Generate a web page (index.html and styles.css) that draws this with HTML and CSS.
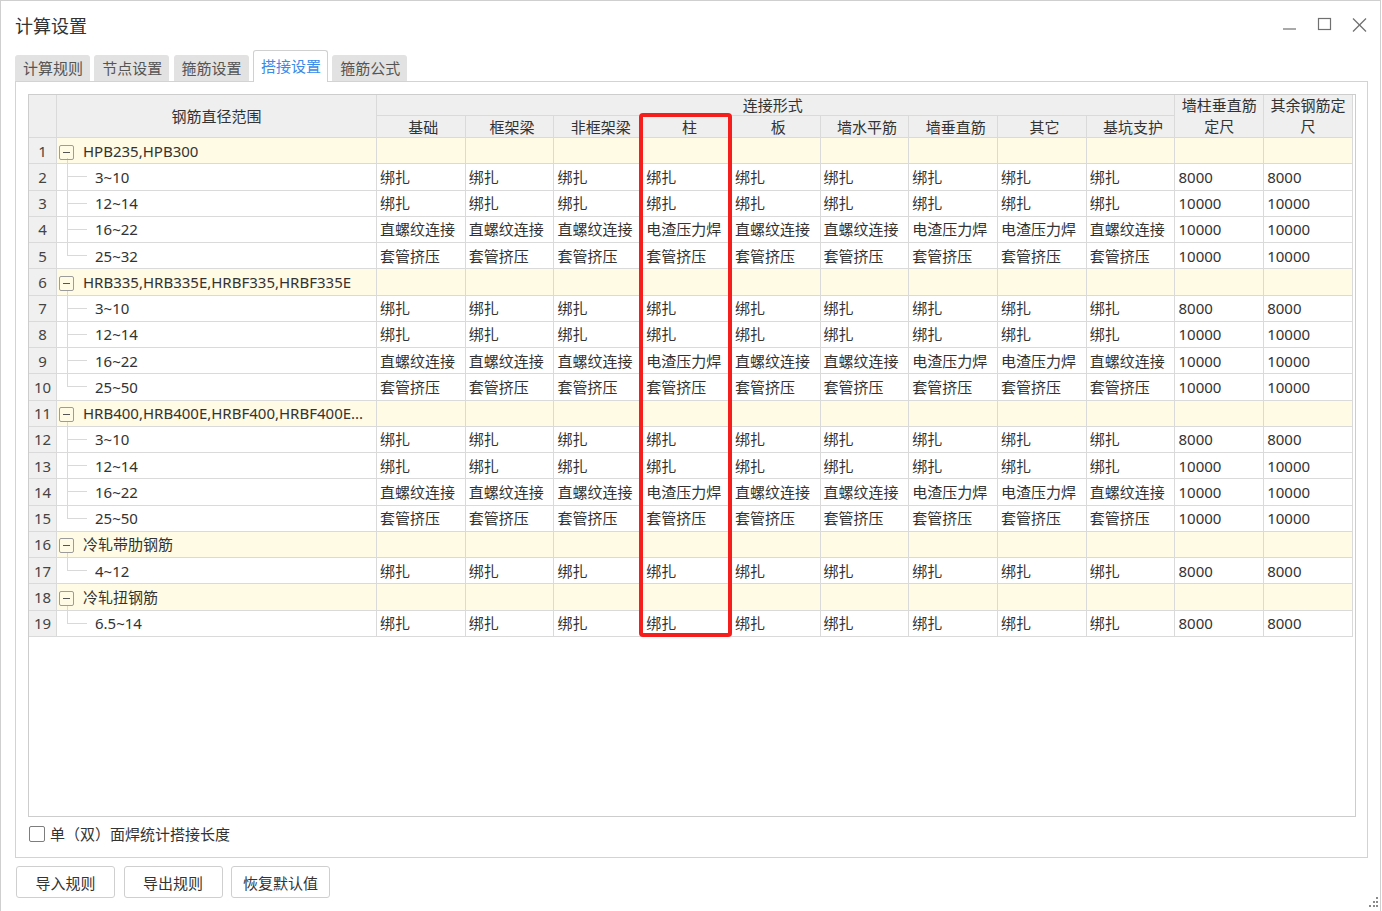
FILE: index.html
```html
<!DOCTYPE html>
<html lang="zh-CN">
<head>
<meta charset="utf-8">
<title>计算设置</title>
<link rel="stylesheet" href="styles.css">
</head>
<body>
<div class="window">
  <div class="titlebar">
    <span class="title">计算设置</span>
    <svg class="controls" width="90" height="18" viewBox="0 0 90 18">
      <line x1="3" y1="12" x2="16" y2="12" stroke="#707070" stroke-width="1.2"/>
      <rect x="38.5" y="1.5" width="12" height="11" fill="none" stroke="#707070" stroke-width="1.2"/>
      <line x1="73" y1="1.5" x2="86" y2="14.5" stroke="#707070" stroke-width="1.2"/>
      <line x1="86" y1="1.5" x2="73" y2="14.5" stroke="#707070" stroke-width="1.2"/>
    </svg>
  </div>
  <div class="tabs">
    <div class="tab">计算规则</div>
    <div class="tab">节点设置</div>
    <div class="tab">箍筋设置</div>
    <div class="tab active">搭接设置</div>
    <div class="tab">箍筋公式</div>
  </div>
  <div class="panel">
    <div class="frame">
      <table class="grid">
        <colgroup><col class="c-rn"><col class="c-nm"><col span="11"></colgroup>
        <thead>
          <tr class="h1">
            <th class="rn" rowspan="2"></th>
            <th rowspan="2">钢筋直径范围</th>
            <th colspan="9" class="span">连接形式</th>
            <th rowspan="2" class="wrap">墙柱垂直筋定尺</th>
            <th rowspan="2" class="wrap">其余钢筋定尺</th>
          </tr>
          <tr class="h2">
            <th>基础</th><th>框架梁</th><th>非框架梁</th><th>柱</th><th>板</th><th>墙水平筋</th><th>墙垂直筋</th><th>其它</th><th>基坑支护</th>
          </tr>
        </thead>
        <tbody>
          <tr class="grp"><td class="rn">1</td><td class="nm g"><i class="exp"></i>HPB235,HPB300</td><td></td><td></td><td></td><td></td><td></td><td></td><td></td><td></td><td></td><td></td><td></td></tr>
          <tr><td class="rn">2</td><td class="nm c">3~10</td><td>绑扎</td><td>绑扎</td><td>绑扎</td><td>绑扎</td><td>绑扎</td><td>绑扎</td><td>绑扎</td><td>绑扎</td><td>绑扎</td><td>8000</td><td>8000</td></tr>
          <tr><td class="rn">3</td><td class="nm c">12~14</td><td>绑扎</td><td>绑扎</td><td>绑扎</td><td>绑扎</td><td>绑扎</td><td>绑扎</td><td>绑扎</td><td>绑扎</td><td>绑扎</td><td>10000</td><td>10000</td></tr>
          <tr><td class="rn">4</td><td class="nm c">16~22</td><td>直螺纹连接</td><td>直螺纹连接</td><td>直螺纹连接</td><td>电渣压力焊</td><td>直螺纹连接</td><td>直螺纹连接</td><td>电渣压力焊</td><td>电渣压力焊</td><td>直螺纹连接</td><td>10000</td><td>10000</td></tr>
          <tr><td class="rn">5</td><td class="nm c last">25~32</td><td>套管挤压</td><td>套管挤压</td><td>套管挤压</td><td>套管挤压</td><td>套管挤压</td><td>套管挤压</td><td>套管挤压</td><td>套管挤压</td><td>套管挤压</td><td>10000</td><td>10000</td></tr>
          <tr class="grp"><td class="rn">6</td><td class="nm g"><i class="exp"></i>HRB335,HRB335E,HRBF335,HRBF335E</td><td></td><td></td><td></td><td></td><td></td><td></td><td></td><td></td><td></td><td></td><td></td></tr>
          <tr><td class="rn">7</td><td class="nm c">3~10</td><td>绑扎</td><td>绑扎</td><td>绑扎</td><td>绑扎</td><td>绑扎</td><td>绑扎</td><td>绑扎</td><td>绑扎</td><td>绑扎</td><td>8000</td><td>8000</td></tr>
          <tr><td class="rn">8</td><td class="nm c">12~14</td><td>绑扎</td><td>绑扎</td><td>绑扎</td><td>绑扎</td><td>绑扎</td><td>绑扎</td><td>绑扎</td><td>绑扎</td><td>绑扎</td><td>10000</td><td>10000</td></tr>
          <tr><td class="rn">9</td><td class="nm c">16~22</td><td>直螺纹连接</td><td>直螺纹连接</td><td>直螺纹连接</td><td>电渣压力焊</td><td>直螺纹连接</td><td>直螺纹连接</td><td>电渣压力焊</td><td>电渣压力焊</td><td>直螺纹连接</td><td>10000</td><td>10000</td></tr>
          <tr><td class="rn">10</td><td class="nm c last">25~50</td><td>套管挤压</td><td>套管挤压</td><td>套管挤压</td><td>套管挤压</td><td>套管挤压</td><td>套管挤压</td><td>套管挤压</td><td>套管挤压</td><td>套管挤压</td><td>10000</td><td>10000</td></tr>
          <tr class="grp"><td class="rn">11</td><td class="nm g"><i class="exp"></i>HRB400,HRB400E,HRBF400,HRBF400E...</td><td></td><td></td><td></td><td></td><td></td><td></td><td></td><td></td><td></td><td></td><td></td></tr>
          <tr><td class="rn">12</td><td class="nm c">3~10</td><td>绑扎</td><td>绑扎</td><td>绑扎</td><td>绑扎</td><td>绑扎</td><td>绑扎</td><td>绑扎</td><td>绑扎</td><td>绑扎</td><td>8000</td><td>8000</td></tr>
          <tr><td class="rn">13</td><td class="nm c">12~14</td><td>绑扎</td><td>绑扎</td><td>绑扎</td><td>绑扎</td><td>绑扎</td><td>绑扎</td><td>绑扎</td><td>绑扎</td><td>绑扎</td><td>10000</td><td>10000</td></tr>
          <tr><td class="rn">14</td><td class="nm c">16~22</td><td>直螺纹连接</td><td>直螺纹连接</td><td>直螺纹连接</td><td>电渣压力焊</td><td>直螺纹连接</td><td>直螺纹连接</td><td>电渣压力焊</td><td>电渣压力焊</td><td>直螺纹连接</td><td>10000</td><td>10000</td></tr>
          <tr><td class="rn">15</td><td class="nm c last">25~50</td><td>套管挤压</td><td>套管挤压</td><td>套管挤压</td><td>套管挤压</td><td>套管挤压</td><td>套管挤压</td><td>套管挤压</td><td>套管挤压</td><td>套管挤压</td><td>10000</td><td>10000</td></tr>
          <tr class="grp"><td class="rn">16</td><td class="nm g"><i class="exp"></i>冷轧带肋钢筋</td><td></td><td></td><td></td><td></td><td></td><td></td><td></td><td></td><td></td><td></td><td></td></tr>
          <tr><td class="rn">17</td><td class="nm c last">4~12</td><td>绑扎</td><td>绑扎</td><td>绑扎</td><td>绑扎</td><td>绑扎</td><td>绑扎</td><td>绑扎</td><td>绑扎</td><td>绑扎</td><td>8000</td><td>8000</td></tr>
          <tr class="grp"><td class="rn">18</td><td class="nm g"><i class="exp"></i>冷轧扭钢筋</td><td></td><td></td><td></td><td></td><td></td><td></td><td></td><td></td><td></td><td></td><td></td></tr>
          <tr><td class="rn">19</td><td class="nm c last">6.5~14</td><td>绑扎</td><td>绑扎</td><td>绑扎</td><td>绑扎</td><td>绑扎</td><td>绑扎</td><td>绑扎</td><td>绑扎</td><td>绑扎</td><td>8000</td><td>8000</td></tr>
        </tbody>
      </table>
      <div class="highlight"></div>
    </div>
    <label class="check"><span class="cb"></span>单（双）面焊统计搭接长度</label>
  </div>
  <div class="buttons">
    <button class="btn">导入规则</button>
    <button class="btn">导出规则</button>
    <button class="btn">恢复默认值</button>
  </div>
  <svg class="grip" width="11" height="11" viewBox="0 0 11 11">
    <rect x="8" y="0" width="2" height="2" fill="#8a8a8a"/>
    <rect x="5" y="4" width="2" height="2" fill="#8a8a8a"/>
    <rect x="8" y="4" width="2" height="2" fill="#8a8a8a"/>
    <rect x="1" y="8" width="2" height="2" fill="#8a8a8a"/>
    <rect x="5" y="8" width="2" height="2" fill="#8a8a8a"/>
    <rect x="8" y="8" width="2" height="2" fill="#8a8a8a"/>
  </svg>
</div>
</body>
</html>
```

FILE: styles.css
```css
* { box-sizing: border-box; }
html, body { margin: 0; padding: 0; }
body {
  font-family: "Noto Sans", "Noto Sans CJK SC", sans-serif;
  font-size: 15px;
  color: #333;
  background: #fff;
}
.window {
  position: relative;
  width: 1381px;
  height: 911px;
  border: 1px solid #cfcfcf;
  border-bottom: none;
  background: #fff;
  display: flex;
  flex-direction: column;
  overflow: hidden;
}
.titlebar {
  height: 49px;
  flex: none;
  display: flex;
  align-items: center;
  padding-left: 14px;
}
.title {
  font-size: 18px;
  color: #333;
  line-height: 24px;
}
.controls {
  margin-left: auto;
  margin-right: 10px;
}
.tabs {
  height: 31px;
  flex: none;
  display: flex;
  align-items: flex-end;
  gap: 4.3px;
  padding-left: 14px;
}
.tab {
  width: 75px;
  height: 26px;
  background: #e2e2e2;
  color: #555;
  border-radius: 3px 3px 0 0;
  display: flex;
  align-items: center;
  justify-content: center;
  line-height: 20px;
  padding-left: 1px;
}
.tab.active {
  position: relative;
  z-index: 1;
  height: 32px;
  margin-bottom: -1px;
  padding-bottom: 1px;
  background: #fff;
  border: 1px solid #d0d0d0;
  border-bottom: none;
  color: #3a8be8;
}
.panel {
  flex: none;
  width: 1353px;
  height: 777px;
  margin-left: 14px;
  border: 1px solid #d3d3d3;
  padding: 12px 11px 15px 12px;
  display: flex;
  flex-direction: column;
}
.frame {
  position: relative;
  width: 1328px;
  height: 723px;
  border: 1px solid #cdcdcd;
  flex: none;
}
.grid {
  width: 1324px;
  table-layout: fixed;
  border-collapse: separate;
  border-spacing: 0;
}
.c-rn { width: 28px; }
.c-nm { width: 320px; }
.grid th, .grid td {
  border-right: 1px solid #dadada;
  border-bottom: 1px solid #dadada;
  padding: 0 3px;
  white-space: nowrap;
  overflow: hidden;
  text-overflow: clip;
  vertical-align: middle;
  line-height: 20px;
  font-weight: normal;
}
.grid th {
  background: #efefef;
  text-align: center;
  color: #333;
}
.grid .h2 th { padding: 0 0 0 5px; }
.grid th.span { padding: 0 6px 0 0; }
.grid th.wrap {
  white-space: normal;
  line-height: 21px;
  padding: 0 2px;
}
.h1 { height: 21px; }
.h2 { height: 22px; }
.grid tbody tr { height: 26.26px; }
.grid td { text-align: left; }
.grid td.rn {
  background: #f0f0f0;
  text-align: center;
  padding: 0;
  color: #444;
}
.grid tr.grp td { background-color: #fffbe4; }
.grid tr.grp td.rn { background: #f0f0f0; }
.grid td.nm.g {
  padding-left: 2px;
  background-image: linear-gradient(#d9d9d9, #d9d9d9);
  background-repeat: no-repeat;
  background-position: 10px 100%;
  background-size: 1px 5px;
}
.grid td.nm.c {
  padding-left: 38px;
  background-image: linear-gradient(#d9d9d9, #d9d9d9), linear-gradient(#d9d9d9, #d9d9d9);
  background-repeat: no-repeat;
  background-position: 10px 0, 10px 50%;
  background-size: 1px 100%, 20px 1px;
}
.grid td.nm.c.last {
  background-size: 1px 50%, 20px 1px;
}
.exp {
  display: inline-block;
  width: 15px;
  height: 15px;
  margin-right: 9px;
  vertical-align: -3px;
  border: 1px solid #9c9c9c;
  border-radius: 2px;
  background: linear-gradient(#555, #555) center / 7px 1px no-repeat;
}
.highlight {
  position: absolute;
  left: 610px;
  top: 18px;
  width: 93px;
  height: 524px;
  border: 4px solid #f61d1d;
  border-radius: 4px;
  pointer-events: none;
}
.check {
  margin-top: 9px;
  height: 16px;
  display: flex;
  align-items: center;
  line-height: 20px;
}
.cb {
  width: 16px;
  height: 16px;
  margin-left: 1px;
  margin-right: 5px;
  border: 1px solid #7d7d7d;
  border-radius: 2px;
  background: #fff;
  flex: none;
}
.buttons {
  display: flex;
  gap: 8.5px;
  margin-top: 8px;
  padding-left: 15px;
}
.btn {
  width: 99px;
  height: 32px;
  background: #fff;
  border: 1px solid #cfcfcf;
  border-radius: 3px;
  font-family: inherit;
  font-size: 15px;
  color: #333;
  padding: 0;
}
.grip {
  position: absolute;
  right: 1px;
  bottom: 3px;
}
```
